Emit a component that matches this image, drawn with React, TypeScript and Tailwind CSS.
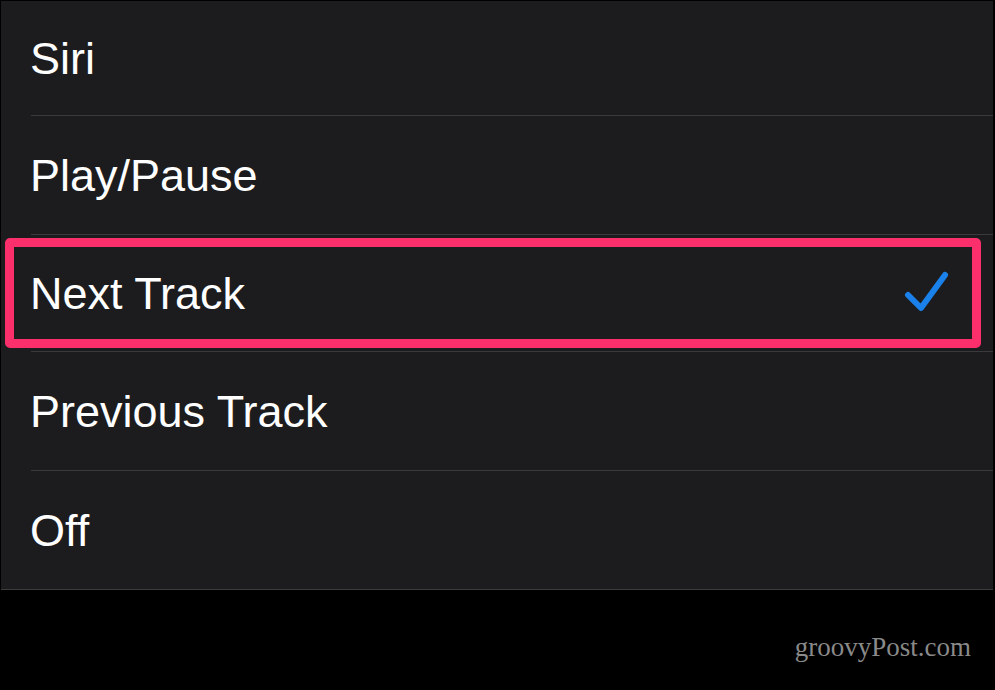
const options = [
  { key: "siri", label: "Siri", h: "h-[114px]" },
  { key: "play", label: "Play/Pause", h: "h-[118px]" },
  { key: "next", label: "Next Track", h: "h-[116px]", selected: true },
  { key: "prev", label: "Previous Track", h: "h-[118px]" },
  { key: "off", label: "Off", h: "h-[118px]" },
];

function Check() {
  return (
    <svg width="46" height="44" viewBox="0 0 46 44" fill="none">
      <path
        d="M5 24 L18 37 L42 4"
        stroke="#1a80ea"
        strokeWidth="6"
        strokeLinecap="round"
        strokeLinejoin="round"
      />
    </svg>
  );
}

export default function App() {
  return (
    <div className="w-[995px] h-[690px] bg-black relative overflow-hidden font-['Liberation_Sans',Arial,sans-serif]">
      {/* Settings list */}
      <div className="ml-px mt-px w-[992px] bg-[#1c1c1e] border-b border-[#3c3c3e]">
        {options.map((opt, i) => (
          <div key={opt.key} className="relative">
            <div className={`${opt.h} flex items-center pl-[29px] pr-[44px]`}>
              <span className="text-[45px] text-white leading-none flex-1">
                {opt.label}
              </span>
              {opt.selected && <Check />}
            </div>
            {i < options.length - 1 && (
              <div className="ml-[30px] h-px bg-[#3a3a3c]" />
            )}
            {opt.selected && (
              <div className="absolute left-[4px] top-[3px] w-[976px] h-[110px] border-[9px] border-[#fb2f6b] rounded-[5px]" />
            )}
          </div>
        ))}
      </div>

      {/* Watermark */}
      <div className="absolute right-[24px] bottom-[23px] text-[27px] text-[#8a8a8a] font-['Liberation_Serif',Georgia,serif]">
        groovyPost.com
      </div>
    </div>
  );
}
